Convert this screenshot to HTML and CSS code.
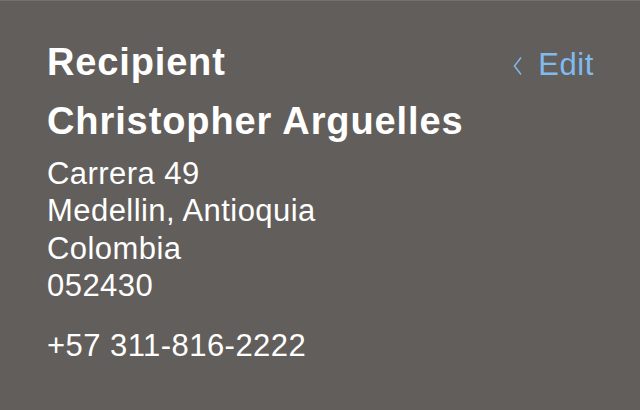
FILE: index.html
```html
<!DOCTYPE html>
<html>
<head>
<meta charset="utf-8">
<link rel="stylesheet" href="styles.css">
</head>
<body>
<div class="card">
  <div class="header">
    <h1 class="title">Recipient</h1>
    <a class="edit"><svg class="chev" width="9" height="18" viewBox="0 0 9 18"><path d="M8 0.5 L1.5 9 L8 17.5" fill="none" stroke="#80bbf0" stroke-width="1.4"/></svg><span class="edit-label">Edit</span></a>
  </div>
  <div class="name">Christopher Arguelles</div>
  <div class="address">
    <div>Carrera 49</div>
    <div>Medellin, Antioquia</div>
    <div>Colombia</div>
    <div>052430</div>
  </div>
  <div class="phone">+57 311-816-2222</div>
</div>
</body>
</html>
```
FILE: styles.css
```css
html, body { margin: 0; padding: 0; }
body {
  width: 640px;
  height: 410px;
  background: #625e5b;
  font-family: "Liberation Sans", Arial, sans-serif;
  color: #ffffff;
  overflow: hidden;
}
.card {
  box-sizing: border-box;
  height: 410px;
  border-top: 1px solid #757170;
  padding: 39px 47px 0 47px;
}
.header {
  display: flex;
  justify-content: space-between;
  align-items: baseline;
}
.title {
  margin: 0;
  font-size: 38px;
  font-weight: bold;
  line-height: 44px;
  letter-spacing: 0.85px;
}
.edit {
  color: #80bbf0;
  font-size: 31px;
  line-height: 44px;
  letter-spacing: 0.6px;
  margin-right: -1px;
}
.chev {
  vertical-align: baseline;
  margin-right: 16px;
}
.name {
  margin-top: 12px;
  font-size: 38px;
  font-weight: bold;
  line-height: 44px;
  letter-spacing: 0.9px;
}
.address {
  margin-top: 12px;
  font-size: 31px;
  line-height: 37.3px;
  letter-spacing: 0.45px;
}
.phone {
  margin-top: 23px;
  font-size: 31px;
  line-height: 37.3px;
  letter-spacing: 0.45px;
}
```
